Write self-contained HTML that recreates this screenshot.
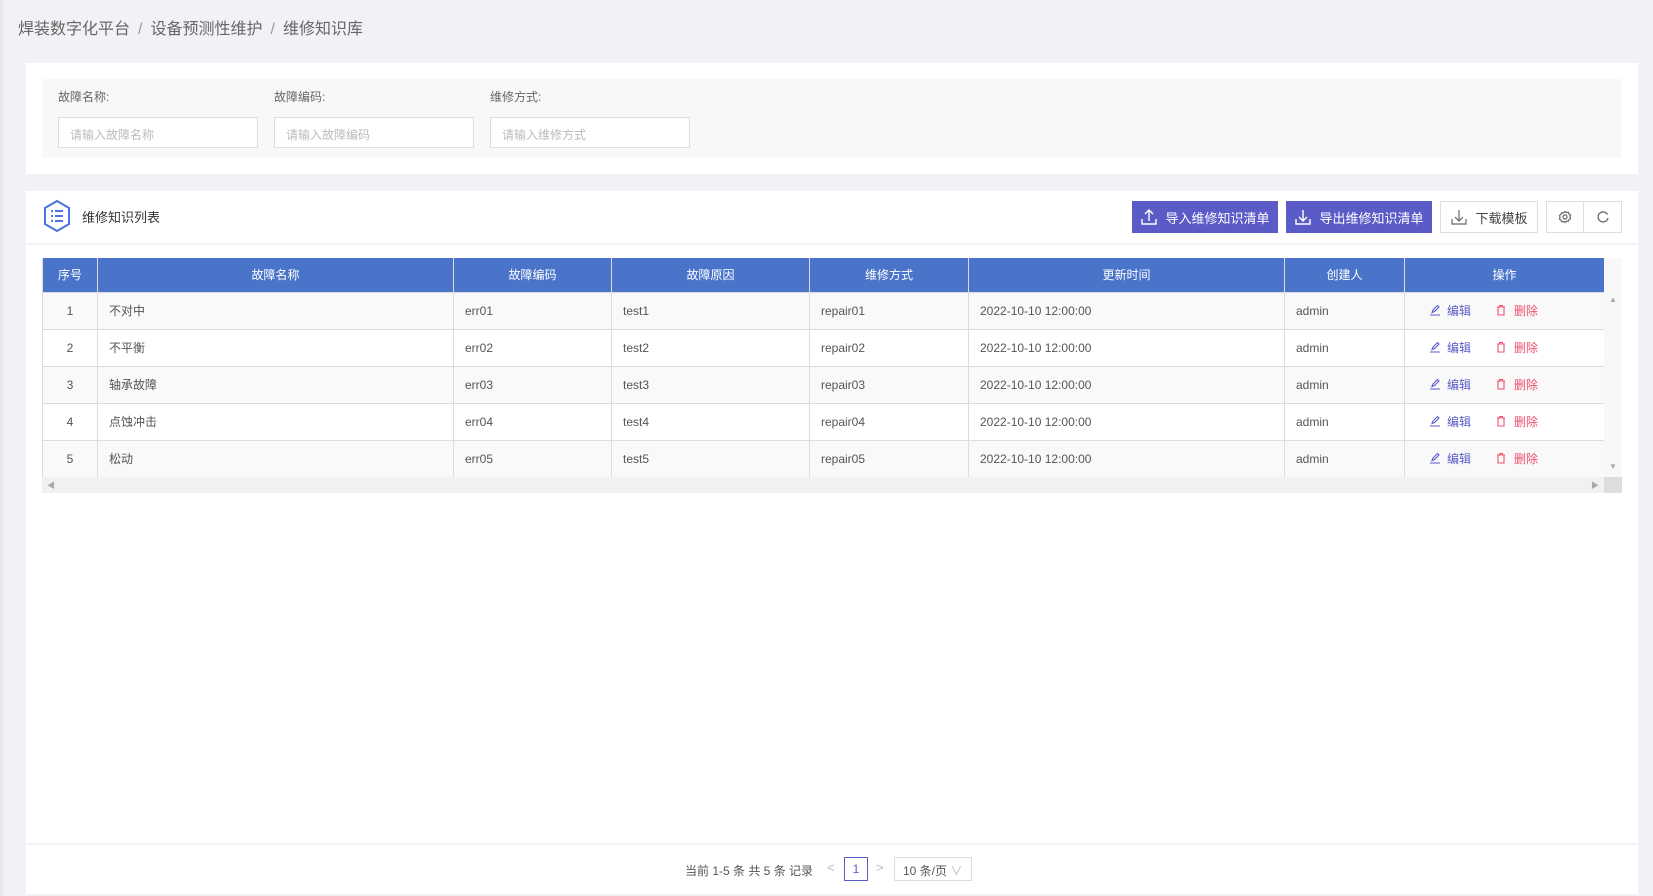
<!DOCTYPE html>
<html><head><meta charset="utf-8"><style>
*{margin:0;padding:0;box-sizing:border-box}
body{width:1653px;height:896px;background:#f0f2f5;font-family:"Liberation Sans","Noto Sans CJK SC",sans-serif;position:relative;overflow:hidden;color:#333}
.a{position:absolute}
.bc{left:18px;top:15px;font-size:16px;color:#666;white-space:nowrap}
.bc span{color:#999;margin:0 8px}
.card{background:#fff}
.lbl{font-size:12px;color:#666;top:88px}
.inp{top:117px;width:200px;height:31px;border:1px solid #dcdcdc;background:#fff;font-size:12px;color:#bbb;padding:8px 11px}
.btn{top:201px;height:32px;color:#fff;background:#5b5bc8;font-size:13px;display:flex;align-items:center;justify-content:center;gap:7px}
.btn2{top:201px;height:32px;border:1px solid #ddd;background:#fff;font-size:13px;color:#444;display:flex;align-items:center;justify-content:center;gap:7px}
table{border-collapse:collapse;table-layout:fixed;font-size:12px}
th{background:#4a74c9;color:#fff;font-weight:normal;height:34px;border:1px solid #dcdcdc;border-top:none}
td{height:37px;border:1px solid #dcdcdc;padding-left:11px;color:#555}
tr:nth-child(even) td{background:#f9f9f9}
td.c{text-align:center;padding:0}
.ed{color:#5b5bc8;margin-left:13px;display:inline-flex;align-items:center;gap:6px}.dl{color:#f0506e;margin-left:25px;display:inline-flex;align-items:center;gap:8px}
</style></head><body>
<div class="a" style="left:0;top:0;width:3px;height:896px;background:#e6e8ec"></div>
<div class="a bc">焊装数字化平台<span>/</span>设备预测性维护<span>/</span>维修知识库</div>
<div class="a card" style="left:26px;top:63px;width:1612px;height:111px"></div>
<div class="a" style="left:42px;top:79px;width:1579px;height:79px;background:#f8f8f8"></div>
<div class="a lbl" style="left:58px">故障名称:</div>
<div class="a lbl" style="left:274px">故障编码:</div>
<div class="a lbl" style="left:490px">维修方式:</div>
<div class="a inp" style="left:58px">请输入故障名称</div>
<div class="a inp" style="left:274px">请输入故障编码</div>
<div class="a inp" style="left:490px">请输入维修方式</div>

<div class="a card" style="left:26px;top:191px;width:1612px;height:703px"></div>
<div class="a" style="left:26px;top:243px;width:1612px;height:2px;background:#f3f3f3"></div>
<svg class="a" style="left:42px;top:199px" width="30" height="34" viewBox="0 0 30 34"><path d="M15 2 L27 9 L27 25 L15 32 L3 25 L3 9 Z" fill="none" stroke="#4a74e0" stroke-width="2"/><g fill="#4a74e0"><rect x="9" y="11" width="2" height="2"/><rect x="13" y="11" width="8" height="2"/><rect x="9" y="16" width="2" height="2"/><rect x="13" y="16" width="8" height="2"/><rect x="9" y="21" width="2" height="2"/><rect x="13" y="21" width="8" height="2"/></g></svg>
<div class="a" style="left:82px;top:207px;font-size:13px;color:#333">维修知识列表</div>
<div class="a btn" style="left:1132px;width:146px"><svg width="18" height="18" viewBox="0 0 18 18" fill="none" stroke="#fff" stroke-width="1.4"><path d="M9 13V2M5 6l4-4 4 4M2 11v5h14v-5"/></svg>导入维修知识清单</div>
<div class="a btn" style="left:1286px;width:146px"><svg width="18" height="18" viewBox="0 0 18 18" fill="none" stroke="#fff" stroke-width="1.4"><path d="M9 2v11M5 9l4 4 4-4M2 11v5h14v-5"/></svg>导出维修知识清单</div>
<div class="a btn2" style="left:1440px;width:98px"><svg width="18" height="18" viewBox="0 0 18 18" fill="none" stroke="#666" stroke-width="1.2"><path d="M9 2v11M5 9l4 4 4-4M2 11v5h14v-5"/></svg>下载模板</div>
<div class="a btn2" style="left:1546px;width:38px"><svg width="14" height="14" viewBox="0 0 14 14" fill="none" stroke="#666" stroke-width="1.2"><circle cx="7" cy="7" r="2"/><path d="M7 1.5l1.5 1 1.8-.2.7 1.6 1.5 1L12 7l.5 1.6-1.5 1-.7 1.6-1.8-.2L7 12.5l-1.5-1-1.8.2-.7-1.6-1.5-1L2 7l-.5-1.6 1.5-1 .7-1.6 1.8.2Z"/></svg></div>
<div class="a btn2" style="left:1583px;width:39px"><svg width="14" height="14" viewBox="0 0 14 14" fill="none" stroke="#666" stroke-width="1.3"><path d="M11.5 4.5A5 5 0 1 0 12 8"/></svg></div>

<table class="a" style="left:42px;top:258px;width:1562px">
<colgroup><col style="width:55px"><col style="width:356px"><col style="width:158px"><col style="width:198px"><col style="width:159px"><col style="width:316px"><col style="width:120px"><col style="width:200px"></colgroup>
<tr><th>序号</th><th>故障名称</th><th>故障编码</th><th>故障原因</th><th>维修方式</th><th>更新时间</th><th>创建人</th><th>操作</th></tr>
<tr><td class="c">1</td><td>不对中</td><td>err01</td><td>test1</td><td>repair01</td><td>2022-10-10 12:00:00</td><td>admin</td><td><span class="ed"><svg width="12" height="12" viewBox="0 0 12 12" fill="none" stroke="#5b5bc8" stroke-width="1.1"><path d="M3 8.5l1-2.5 4.5-4.5 1.5 1.5-4.5 4.5zM1 11h10"/></svg>编辑</span><span class="dl"><svg width="10" height="12" viewBox="0 0 10 12" fill="none" stroke="#f0506e" stroke-width="1.1"><path d="M1 3h8M3.5 3V1.5h3V3M2 3v8h6V3"/></svg>删除</span></td></tr>
<tr><td class="c">2</td><td>不平衡</td><td>err02</td><td>test2</td><td>repair02</td><td>2022-10-10 12:00:00</td><td>admin</td><td><span class="ed"><svg width="12" height="12" viewBox="0 0 12 12" fill="none" stroke="#5b5bc8" stroke-width="1.1"><path d="M3 8.5l1-2.5 4.5-4.5 1.5 1.5-4.5 4.5zM1 11h10"/></svg>编辑</span><span class="dl"><svg width="10" height="12" viewBox="0 0 10 12" fill="none" stroke="#f0506e" stroke-width="1.1"><path d="M1 3h8M3.5 3V1.5h3V3M2 3v8h6V3"/></svg>删除</span></td></tr>
<tr><td class="c">3</td><td>轴承故障</td><td>err03</td><td>test3</td><td>repair03</td><td>2022-10-10 12:00:00</td><td>admin</td><td><span class="ed"><svg width="12" height="12" viewBox="0 0 12 12" fill="none" stroke="#5b5bc8" stroke-width="1.1"><path d="M3 8.5l1-2.5 4.5-4.5 1.5 1.5-4.5 4.5zM1 11h10"/></svg>编辑</span><span class="dl"><svg width="10" height="12" viewBox="0 0 10 12" fill="none" stroke="#f0506e" stroke-width="1.1"><path d="M1 3h8M3.5 3V1.5h3V3M2 3v8h6V3"/></svg>删除</span></td></tr>
<tr><td class="c">4</td><td>点蚀冲击</td><td>err04</td><td>test4</td><td>repair04</td><td>2022-10-10 12:00:00</td><td>admin</td><td><span class="ed"><svg width="12" height="12" viewBox="0 0 12 12" fill="none" stroke="#5b5bc8" stroke-width="1.1"><path d="M3 8.5l1-2.5 4.5-4.5 1.5 1.5-4.5 4.5zM1 11h10"/></svg>编辑</span><span class="dl"><svg width="10" height="12" viewBox="0 0 10 12" fill="none" stroke="#f0506e" stroke-width="1.1"><path d="M1 3h8M3.5 3V1.5h3V3M2 3v8h6V3"/></svg>删除</span></td></tr>
<tr><td class="c">5</td><td>松动</td><td>err05</td><td>test5</td><td>repair05</td><td>2022-10-10 12:00:00</td><td>admin</td><td><span class="ed"><svg width="12" height="12" viewBox="0 0 12 12" fill="none" stroke="#5b5bc8" stroke-width="1.1"><path d="M3 8.5l1-2.5 4.5-4.5 1.5 1.5-4.5 4.5zM1 11h10"/></svg>编辑</span><span class="dl"><svg width="10" height="12" viewBox="0 0 10 12" fill="none" stroke="#f0506e" stroke-width="1.1"><path d="M1 3h8M3.5 3V1.5h3V3M2 3v8h6V3"/></svg>删除</span></td></tr>
</table>
<div class="a" style="left:1604px;top:258px;width:18px;height:34px;background:#f8f8f8"></div>
<div class="a" style="left:1604px;top:292px;width:18px;height:185px;background:#f8f8f8;font-size:8px;color:#aaa;text-align:center;padding-top:3px">▲<div style="margin-top:158px">▼</div></div>
<div class="a" style="left:42px;top:477px;width:1562px;height:16px;background:#f1f1f1;font-size:8px;color:#aaa;padding:3px 5px">◀<span style="float:right">▶</span></div>
<div class="a" style="left:1604px;top:477px;width:18px;height:16px;background:#ddd"></div>

<div class="a" style="left:26px;top:843px;width:1612px;height:2px;background:#f3f3f3"></div>
<div class="a" style="left:685px;top:862px;font-size:12px;color:#555">当前 1-5 条 共 5 条 记录</div>
<div class="a" style="left:827px;top:860px;font-size:13px;color:#bbb">&lt;</div>
<div class="a" style="left:844px;top:857px;width:24px;height:24px;border:1px solid #5b5bc8;color:#5b5bc8;font-size:12px;text-align:center;line-height:22px">1</div>
<div class="a" style="left:876px;top:860px;font-size:13px;color:#bbb">&gt;</div>
<div class="a" style="left:894px;top:857px;width:78px;height:24px;border:1px solid #ddd;font-size:12px;color:#555;padding:4px 8px">10 条/页 <span style="color:#bbb">∨</span></div>
</body></html>
